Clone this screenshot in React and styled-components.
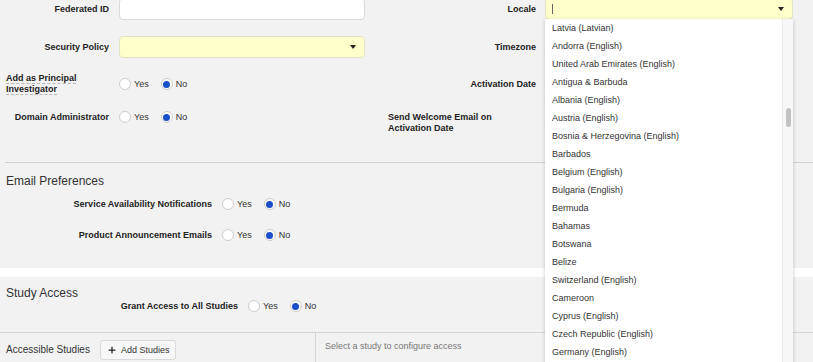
import React from "react";
import styled, { createGlobalStyle } from "styled-components";
import { Plus } from "lucide-react";

const locales = [
  "Latvia (Latvian)",
  "Andorra (English)",
  "United Arab Emirates (English)",
  "Antigua & Barbuda",
  "Albania (English)",
  "Austria (English)",
  "Bosnia & Herzegovina (English)",
  "Barbados",
  "Belgium (English)",
  "Bulgaria (English)",
  "Bermuda",
  "Bahamas",
  "Botswana",
  "Belize",
  "Switzerland (English)",
  "Cameroon",
  "Cyprus (English)",
  "Czech Republic (English)",
  "Germany (English)",
];

const RadioGroup = ({ value }) => (
  <Radios>
    <Option>
      <Radio $checked={value === "yes"} />
      Yes
    </Option>
    <Option>
      <Radio $checked={value === "no"} />
      No
    </Option>
  </Radios>
);

const Select = ({ cursor, children }) => (
  <SelectBox>
    {cursor ? <TextCursor /> : <span />}
    <Caret />
    {children}
  </SelectBox>
);

const App = () => {
  return (
    <>
      <GlobalStyle />
      <Page>
        <Section>
          <Fields>
            <FieldColumn $labelWidth={103} $controlWidth={246} $gap={10}>
              <Label>
                <span>Federated ID</span>
              </Label>
              <TextInput />
              <Label>
                <span>Security Policy</span>
              </Label>
              <Select />
              <Label>
                <Hint>Add as Principal Investigator</Hint>
              </Label>
              <RadioGroup value="no" />
              <Label>
                <span>Domain Administrator</span>
              </Label>
              <RadioGroup value="no" />
            </FieldColumn>

            <FieldColumn $labelWidth={148} $controlWidth={248} $gap={9}>
              <Label>
                <span>Locale</span>
              </Label>
              <Select cursor>
                <Menu>
                  <MenuList>
                    {locales.map((name) => (
                      <MenuItem key={name}>{name}</MenuItem>
                    ))}
                  </MenuList>
                  <ScrollTrack>
                    <ScrollThumb />
                  </ScrollTrack>
                </Menu>
              </Select>
              <Label>
                <span>Timezone</span>
              </Label>
              <Select />
              <Label>
                <span>Activation Date</span>
              </Label>
              <TextInput />
              <Label $offset={6}>
                <span>Send Welcome Email on Activation Date</span>
              </Label>
              <Toggle />
            </FieldColumn>
          </Fields>

          <Rule />
          <Heading>Email Preferences</Heading>
          <PrefList>
            <PrefRow $labelWidth={206}>
              <Label>
                <span>Service Availability Notifications</span>
              </Label>
              <RadioGroup value="no" />
            </PrefRow>
            <PrefRow $labelWidth={206}>
              <Label>
                <span>Product Announcement Emails</span>
              </Label>
              <RadioGroup value="no" />
            </PrefRow>
          </PrefList>
        </Section>

        <StudySection>
          <Heading $top={9}>Study Access</Heading>
          <PrefRow $labelWidth={232} $pull>
            <Label>
              <span>Grant Access to All Studies</span>
            </Label>
            <RadioGroup value="no" />
          </PrefRow>
          <StudiesPane>
            <StudiesList>
              <SubHeading>Accessible Studies</SubHeading>
              <AddButton>
                <Plus size={10} strokeWidth={3} />
                Add Studies
              </AddButton>
            </StudiesList>
            <StudyDetail>Select a study to configure access</StudyDetail>
          </StudiesPane>
        </StudySection>
      </Page>
    </>
  );
};

export default App;

const GlobalStyle = createGlobalStyle`
  html, body {
    margin: 0;
    padding: 0;
    background: #ffffff;
  }
  body {
    font-family: "Liberation Sans", Arial, Helvetica, sans-serif;
    color: #222;
  }
  * {
    box-sizing: border-box;
  }
`;

const Page = styled.div`
  width: 813px;
  height: 362px;
  overflow: hidden;
  display: flex;
  flex-direction: column;
`;

const Section = styled.div`
  background: #f2f2f2;
  display: flex;
  flex-direction: column;
  padding-bottom: 22px;
  margin-bottom: 9px;
`;

const StudySection = styled.div`
  background: #f2f2f2;
  display: flex;
  flex-direction: column;
  flex: 1;
`;

const Fields = styled.div`
  display: flex;
  gap: 23px;
  padding-left: 6px;
  margin-top: -2px;
  position: relative;
  z-index: 2;
`;

const FieldColumn = styled.div`
  display: grid;
  grid-template-columns: ${(p) => p.$labelWidth}px ${(p) => p.$controlWidth}px;
  grid-template-rows: 38px 37px 33px auto;
  column-gap: ${(p) => p.$gap}px;
  align-items: start;
`;

const Label = styled.div`
  display: flex;
  justify-content: flex-end;
  align-items: center;
  min-height: 22px;
  margin-top: ${(p) => p.$offset || 0}px;
  font-size: 9px;
  line-height: 11px;
  font-weight: bold;
  color: #222;
`;

const Hint = styled.span`
  text-decoration: underline dashed #b8b8b8;
  text-underline-offset: 2px;
`;

const TextInput = styled.input`
  display: block;
  width: 100%;
  height: 22px;
  margin: 0;
  background: #ffffff;
  border: 1px solid #d9d9d9;
  border-radius: 4px;
  outline: none;
`;

const Toggle = styled.span`
  display: block;
  width: 28px;
  height: 16px;
  margin-top: 9px;
  border-radius: 8px;
  background: #cfcfcf;
`;

const SelectBox = styled.div`
  position: relative;
  display: flex;
  align-items: center;
  justify-content: space-between;
  height: 22px;
  padding: 0 8px 0 6px;
  background: #ffffcc;
  border: 1px solid #e2e2c4;
  border-radius: 4px;
`;

const TextCursor = styled.span`
  width: 1px;
  height: 10px;
  background: #666;
`;

const Caret = styled.span`
  width: 0;
  height: 0;
  border-left: 3px solid transparent;
  border-right: 3px solid transparent;
  border-top: 4px solid #222;
`;

const Menu = styled.div`
  position: absolute;
  top: 100%;
  left: -1px;
  right: -1px;
  height: 350px;
  display: flex;
  background: #ffffff;
  box-shadow: 0 1px 4px rgba(0, 0, 0, 0.22);
  z-index: 10;
`;

const MenuList = styled.ul`
  flex: 1;
  list-style: none;
  margin: 0;
  padding: 0;
`;

const MenuItem = styled.li`
  height: 18px;
  line-height: 18px;
  padding-left: 7px;
  font-size: 9px;
  color: #333;
  white-space: nowrap;
`;

const ScrollTrack = styled.div`
  width: 11px;
  padding: 89px 0 0 3px;
  background: #f7f7f7;
  border-left: 1px solid #ebebeb;
`;

const ScrollThumb = styled.div`
  width: 5px;
  height: 19px;
  border-radius: 3px;
  background: #c2c2c2;
`;

const Radios = styled.div`
  display: flex;
  align-items: center;
  gap: 12px;
  height: 22px;
`;

const Option = styled.label`
  display: flex;
  align-items: center;
  gap: 3px;
  font-size: 9px;
  color: #333;
`;

const Radio = styled.span`
  display: flex;
  align-items: center;
  justify-content: center;
  width: 12px;
  height: 12px;
  border-radius: 50%;
  background: #ffffff;
  border: 1px solid #cdcdcd;

  &::after {
    content: "";
    display: ${(p) => (p.$checked ? "block" : "none")};
    width: 7px;
    height: 7px;
    border-radius: 50%;
    background: #1a4fc9;
  }
`;

const Rule = styled.div`
  margin: 28px 0 0 5px;
  border-top: 1px solid #d0d0d0;
`;

const Heading = styled.div`
  margin: ${(p) => p.$top || 11}px 0 0 6px;
  font-size: 12px;
  line-height: 14px;
  color: #333;
`;

const PrefList = styled.div`
  display: flex;
  flex-direction: column;
  gap: 9px;
  margin-top: 5px;
`;

const PrefRow = styled.div`
  display: grid;
  grid-template-columns: ${(p) => p.$labelWidth}px auto;
  column-gap: 10px;
  align-items: center;
  height: 22px;
  padding-left: 6px;
  margin-top: ${(p) => (p.$pull ? "-5px" : "0")};
  margin-bottom: ${(p) => (p.$pull ? "15px" : "0")};
`;

const StudiesPane = styled.div`
  flex: 1;
  display: grid;
  grid-template-columns: 316px 1fr;
  border-top: 1px solid #d5d5d5;
`;

const StudiesList = styled.div`
  display: flex;
  align-items: flex-start;
  gap: 10px;
  padding: 7px 6px;
  border-right: 1px solid #d5d5d5;
`;

const SubHeading = styled.span`
  font-size: 10px;
  line-height: 20px;
  color: #333;
`;

const AddButton = styled.button`
  display: flex;
  align-items: center;
  gap: 4px;
  height: 20px;
  padding: 0 6px 0 6px;
  font-family: inherit;
  font-size: 9px;
  color: #333;
  background: #f7f7f7;
  border: 1px solid #d9d9d9;
  border-radius: 3px;

  svg {
    color: #222;
  }
`;

const StudyDetail = styled.div`
  padding: 8px 9px;
  font-size: 9px;
  line-height: 11px;
  color: #777;
`;
